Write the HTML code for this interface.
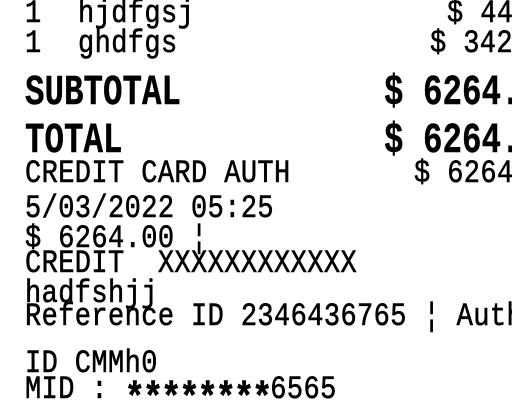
<!DOCTYPE html>
<html><head><meta charset="utf-8"><style>
html,body{margin:0;padding:0;background:#fff;}
body{width:512px;height:400px;overflow:hidden;position:relative;}
#w{position:absolute;left:0;top:0;width:512px;height:400px;overflow:hidden;}
.l{position:absolute;white-space:pre;font-family:"Liberation Mono",monospace;font-size:27px;line-height:1;color:#000;transform:scale(1,1.2);transform-origin:0 0;letter-spacing:0.4px;-webkit-text-stroke:0.5px #000;}
.b{font-size:32.5px;font-weight:bold;transform:scale(1,1.3);letter-spacing:0;-webkit-text-stroke:0.3px #000;}
.st{font-size:34px;font-weight:bold;display:inline-block;letter-spacing:-2.2px;vertical-align:-10px;}
</style></head><body><div id="w">
<div class="l" style="left:25px;top:-1px">1</div>
<div class="l" style="left:78px;top:-1px">hjdfgsj</div>
<div class="l" style="left:447px;top:-1px">$ 44.00</div>
<div class="l" style="left:25px;top:29px">1</div>
<div class="l" style="left:78px;top:29px">ghdfgs</div>
<div class="l" style="left:430px;top:29px">$ 342.00</div>
<div class="l b" style="left:25px;top:73px">SUBTOTAL</div>
<div class="l b" style="left:384px;top:73px">$ 6264.00</div>
<div class="l b" style="left:25px;top:121px">TOTAL</div>
<div class="l b" style="left:384px;top:121px">$ 6264.00</div>
<div class="l" style="left:25px;top:159px">CREDIT CARD AUTH</div>
<div class="l" style="left:414px;top:159px">$ 6264.00</div>
<div class="l" style="left:25px;top:194px">5/03/2022 05:25</div>
<div class="l" style="left:25px;top:224px">$ 6264.00 ¦</div>
<div class="l" style="left:25px;top:249px">CREDIT  XXXXXXXXXXXX</div>
<div class="l" style="left:25px;top:279px">hadfshjj</div>
<div class="l" style="left:25px;top:302px">Reference ID 2346436765 ¦ Auth</div>
<div class="l" style="left:25px;top:349px">ID CMMh0</div>
<div class="l" style="left:25px;top:375px">MID : <span class="st">********</span>6565</div>
</div></body></html>
